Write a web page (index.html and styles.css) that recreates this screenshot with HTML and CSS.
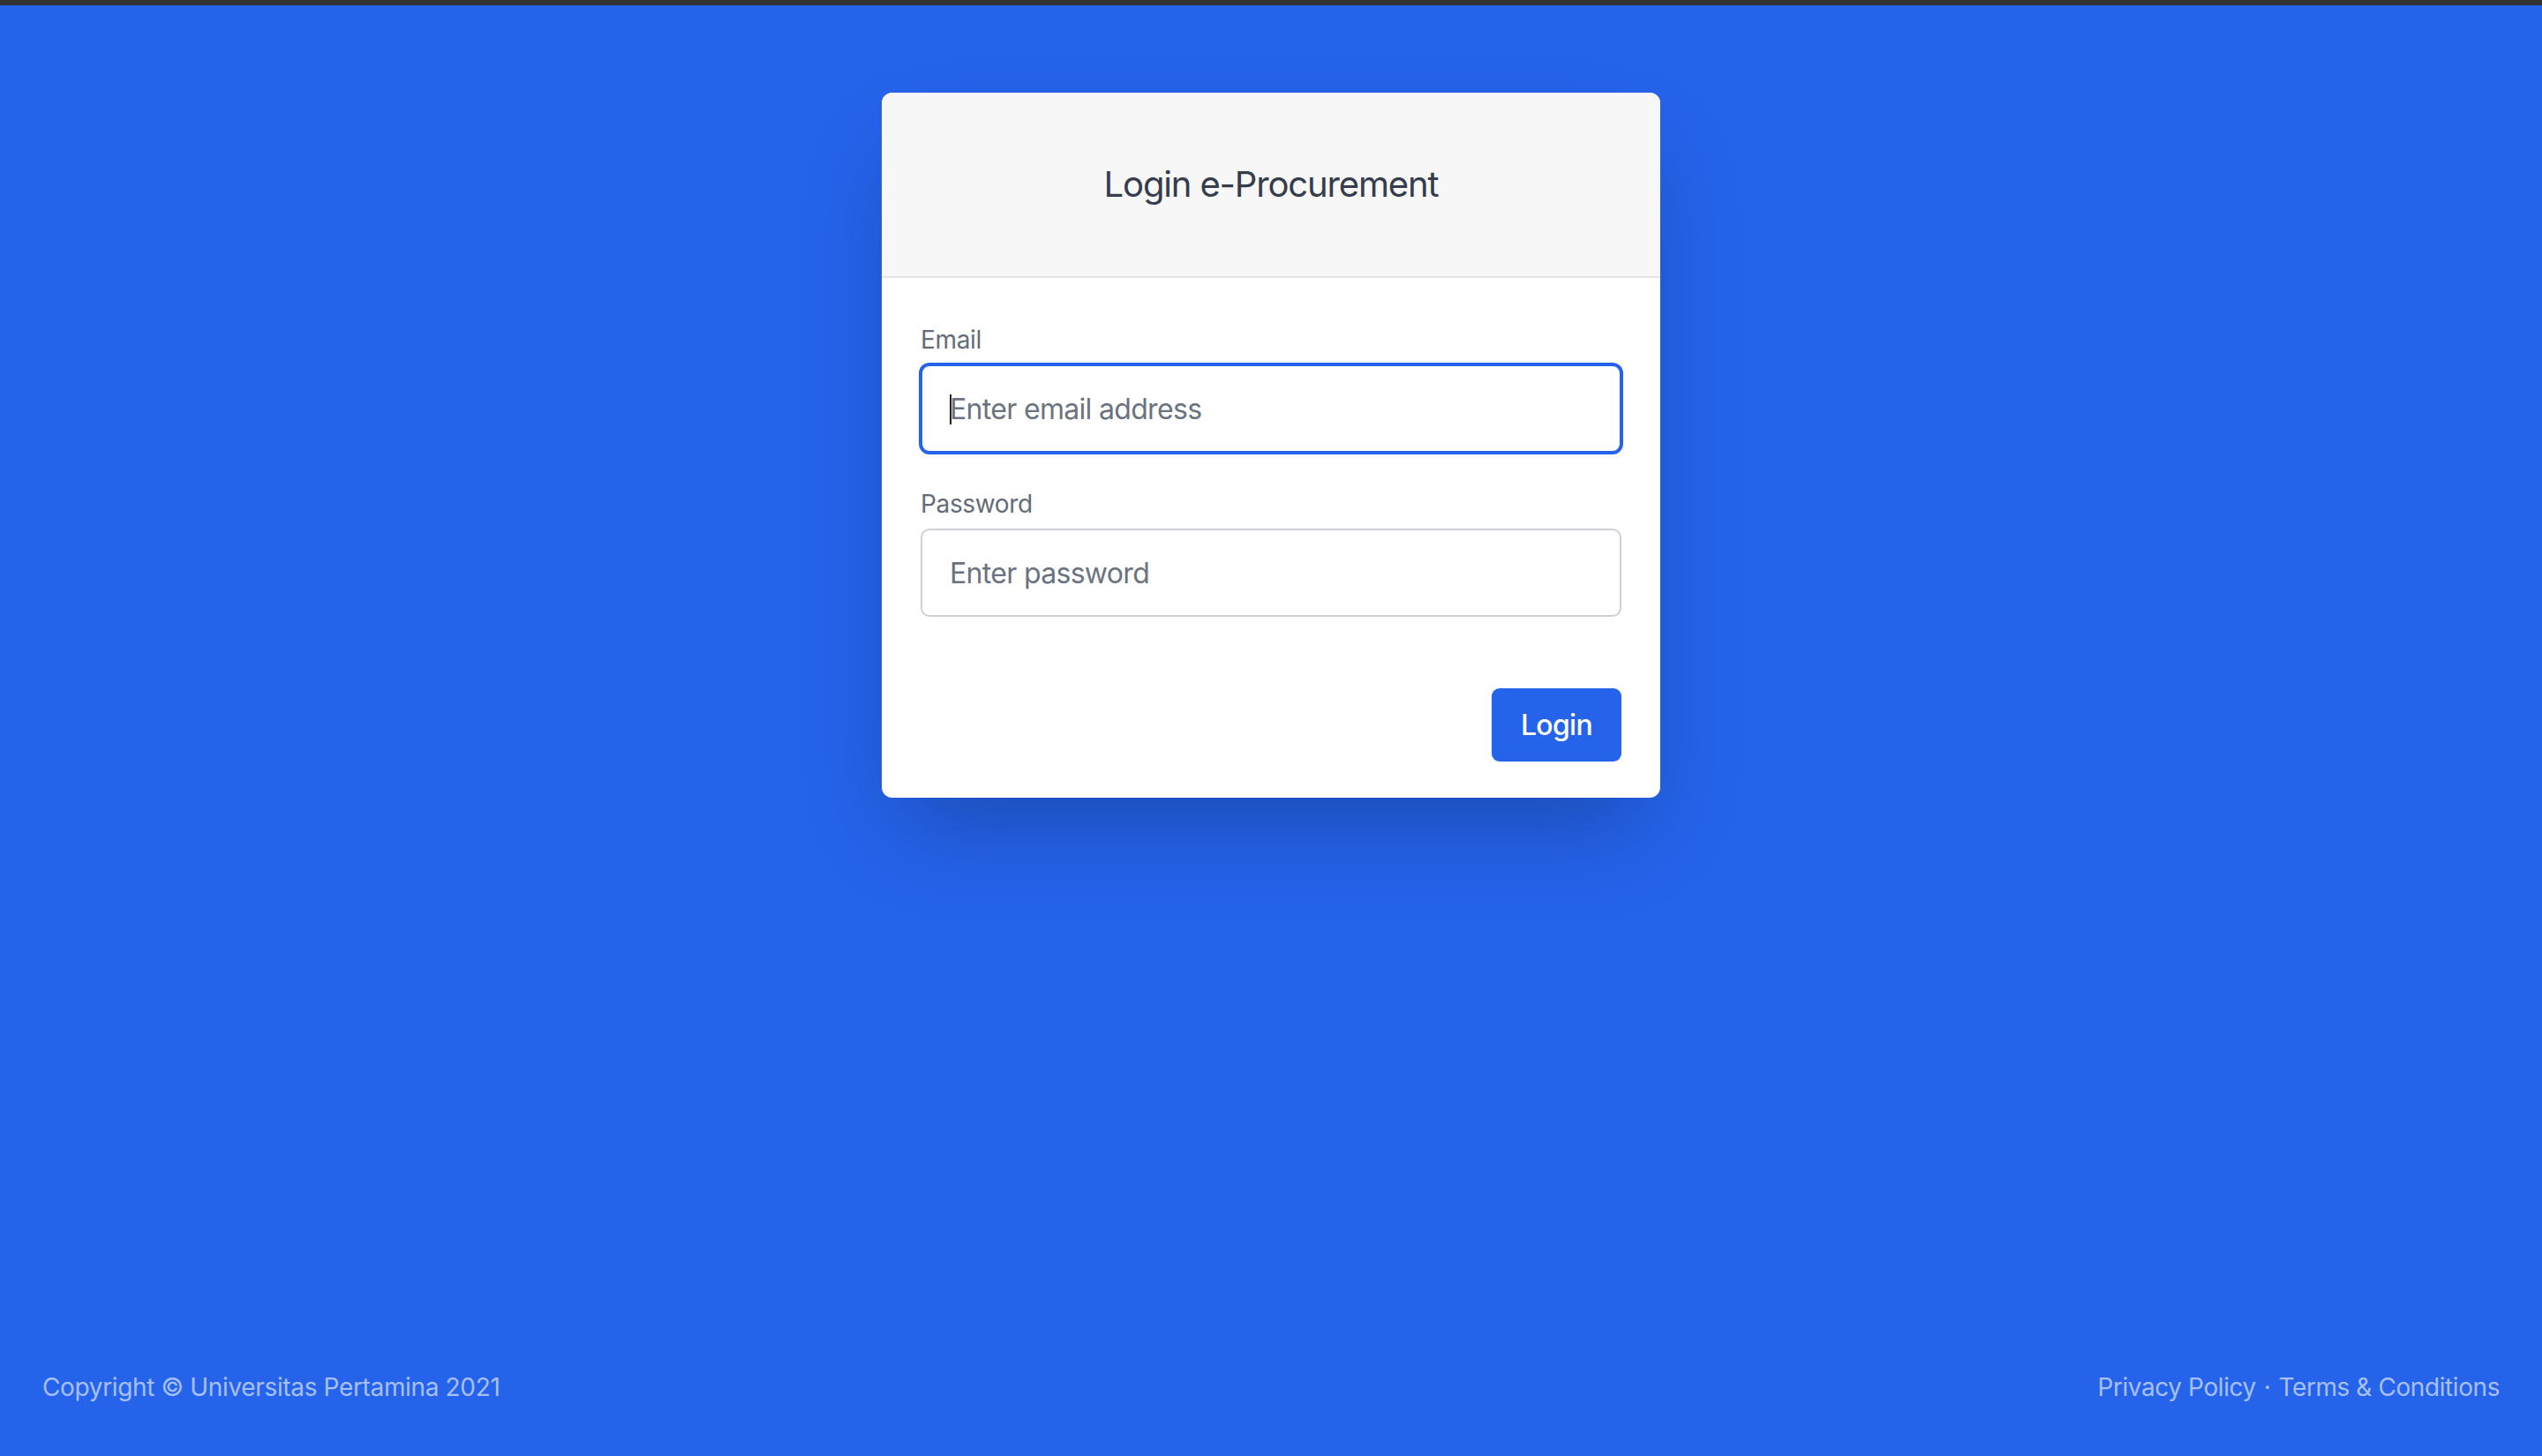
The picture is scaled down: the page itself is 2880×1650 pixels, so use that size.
FILE: index.html
```html
<!DOCTYPE html>
<html lang="en">
<head>
<meta charset="utf-8">
<title>Login e-Procurement</title>
<link rel="stylesheet" href="styles.css">
</head>
<body>
<div class="topbar"></div>
<main class="main">
  <section class="card">
    <header class="card-header">
      <h1 class="card-title">Login e-Procurement</h1>
    </header>
    <form class="card-body">
      <div class="field">
        <label class="field-label" for="email">Email</label>
        <div class="field-control is-focused">
          <span class="caret"></span>
          <input class="field-input" id="email" type="email" placeholder="Enter email address">
        </div>
      </div>
      <div class="field">
        <label class="field-label" for="password">Password</label>
        <div class="field-control">
          <input class="field-input" id="password" type="password" placeholder="Enter password">
        </div>
      </div>
      <div class="actions">
        <button class="btn-primary" type="button">Login</button>
      </div>
    </form>
  </section>
</main>
<footer class="footer">
  <div class="footer-text">Copyright © Universitas Pertamina 2021</div>
  <div class="footer-links">
    <a class="footer-link" href="#">Privacy Policy</a>
    <span class="footer-sep">·</span>
    <a class="footer-link" href="#">Terms &amp; Conditions</a>
  </div>
</footer>
</body>
</html>
```
FILE: styles.css
```css
* { box-sizing: border-box; }
html, body { height: 100%; }
body {
  margin: 0;
  background: #2563eb;
  font-family: Inter, "Noto Sans", "Liberation Sans", sans-serif;
  display: flex;
  flex-direction: column;
  min-height: 100vh;
}
.topbar {
  height: 6px;
  background: #333333;
  flex: none;
}
.main {
  flex: 1;
  display: flex;
  justify-content: center;
  align-items: flex-start;
  padding-top: 99px;
}
.card {
  width: 882px;
  background: #ffffff;
  border-radius: 12px;
  overflow: hidden;
  box-shadow: 0 50px 100px -24px rgba(0, 0, 0, 0.25);
}
.card-header {
  background: #f7f7f8;
  border-bottom: 2px solid #e1e2e6;
  padding: 76px 44px;
  text-align: center;
}
.card-title {
  margin: 0;
  font-size: 40px;
  line-height: 56px;
  font-weight: 400;
  color: #353c4c;
  letter-spacing: -1.15px;
}
.card-body {
  padding: 50px 44px 41px;
  margin: 0;
}
.field + .field { margin-top: 38px; }
.field-label {
  display: block;
  font-size: 28px;
  line-height: 40px;
  color: #646b78;
  margin-bottom: 8px;
  letter-spacing: -0.35px;
}
.field-control {
  position: relative;
  height: 100px;
  border: 2px solid #cdd0d7;
  border-radius: 10px;
  background: #fff;
}
.field-control.is-focused {
  border-color: #2563eb;
  box-shadow: 0 0 0 2px #2563eb;
}
.field-input {
  width: 100%;
  height: 100%;
  border: 0;
  outline: none;
  background: transparent;
  padding: 0 31px;
  font-family: inherit;
  font-size: 32px;
  letter-spacing: -0.68px;
  color: #1f2937;
}
.field-input::placeholder { color: #6b7280; }
.caret {
  position: absolute;
  left: 31px;
  top: 32px;
  width: 2px;
  height: 34px;
  background: #222;
}
.actions {
  display: flex;
  justify-content: flex-end;
  margin-top: 81px;
}
.btn-primary {
  height: 83px;
  padding: 0 33px;
  border: 0;
  border-radius: 9px;
  background: #2563eb;
  color: #fff;
  font-family: inherit;
  font-size: 32px;
  font-weight: 500;
  letter-spacing: -0.7px;
}
.footer {
  display: flex;
  justify-content: space-between;
  align-items: center;
  padding: 0 48px 58px;
  font-size: 28px;
  line-height: 40px;
  color: rgba(255, 255, 255, 0.6);
  letter-spacing: -0.35px;
}
.footer-links { display: flex; gap: 9px; letter-spacing: -0.42px; }
.footer-link { color: inherit; text-decoration: none; }
```
